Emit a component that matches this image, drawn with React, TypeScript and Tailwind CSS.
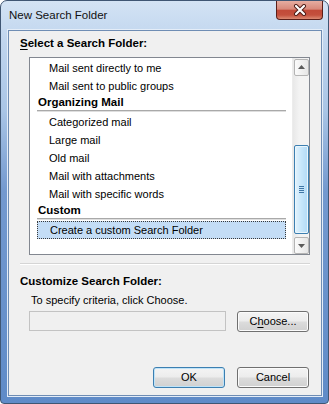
import React from "react";

const font = { fontFamily: '"Segoe UI", "Liberation Sans", Arial, sans-serif' };

function Row({ text, selected }: { text: string; selected?: boolean }) {
  return (
    <div
      className={
        "h-[18px] flex items-center pl-[12px] mx-[7px] mr-[6px] " +
        (selected ? "bg-[#c4ddf6] border border-dotted border-[#3a3a3a] pl-[11px]" : "")
      }
    >
      {text}
    </div>
  );
}

function Header({ text }: { text: string }) {
  return (
    <div className="h-[18px] flex flex-col ml-[7px] mr-[6px]">
      <div className="h-[15px] flex items-center pl-[1px] font-bold text-[11.5px]">{text}</div>
      <div className="h-[2px] border-t border-[#a9a9a9] bg-[#dedede]"></div>
    </div>
  );
}

function Btn({ children, def }: { children: React.ReactNode; def?: boolean }) {
  return (
    <div
      className={
        "w-[72px] h-[21px] rounded-[3px] border flex items-center justify-center " +
        (def
          ? "border-[#3c7fb1] shadow-[inset_0_0_0_1px_#bfe3f8] bg-[linear-gradient(180deg,#f4f4f4_0%,#ececec_48%,#dcdcdc_52%,#d0d0d0_100%)]"
          : "border-[#707070] shadow-[inset_0_0_0_1px_#fbfbfb] bg-[linear-gradient(180deg,#f4f4f4_0%,#ececec_48%,#dcdcdc_52%,#d0d0d0_100%)]")
      }
    >
      {children}
    </div>
  );
}

function ArrowBtn({ up }: { up?: boolean }) {
  return (
    <div className="w-[15px] h-[17px] mx-auto rounded-[2px] border border-[#b4b4b4] bg-[linear-gradient(90deg,#fbfbfb,#e6e6e6)] flex items-center justify-center">
      <svg width="7" height="4" viewBox="0 0 7 4">
        {up ? <path d="M0 4 L3.5 0 L7 4 Z" fill="#5a5a5a" /> : <path d="M0 0 L3.5 4 L7 0 Z" fill="#5a5a5a" />}
      </svg>
    </div>
  );
}

export default function App() {
  return (
    <div className="w-[329px] h-[404px] bg-white text-[11px] text-black" style={font}>
      <div className="relative w-[329px] h-[404px] rounded-t-[7px] rounded-b-[4px] border border-[#3f5673] bg-[linear-gradient(180deg,#d3e3f4_0px,#c0d5ee_40px,#a9c5e6_110px,#7399cf_190px,#5f8bc8_404px)] flex flex-col">
        {/* title bar */}
        <div className="h-[29px] flex items-center pl-[8px] text-[11.5px] text-[#111]">New Search Folder</div>
        <div className="absolute top-0 right-[5px] w-[47px] h-[19px] rounded-b-[4px] border border-t-0 border-[#5b1f19] bg-[linear-gradient(180deg,#e6ada1_0%,#d8897a_45%,#c24a38_52%,#c4503d_78%,#dc8a72_100%)] flex items-center justify-center">
          <svg width="14" height="12" viewBox="0 0 14 12">
            <path d="M3 2 L11 10 M11 2 L3 10" stroke="#4a1a14" strokeWidth="4" strokeLinecap="round" />
            <path d="M3 2 L11 10 M11 2 L3 10" stroke="#ffffff" strokeWidth="2.2" strokeLinecap="round" />
          </svg>
        </div>
        {/* client */}
        <div className="ml-[7px] mr-[6px] mb-[7px] flex-1 border border-[#6f8db4] shadow-[0_0_0_1px_#e4edf8] bg-[#f0f0f0] flex flex-col">
          <div className="mt-[4px] ml-[11px] h-[16px] leading-[16px] font-bold text-[11.5px]">
            <span className="underline underline-offset-[2px]">S</span>elect a Search Folder:
          </div>
          <div className="mt-[6px] ml-[20px] w-[281px] h-[198px] border border-[#828790] bg-white flex">
            <div className="flex-1 pt-[1px] flex flex-col">
              <Row text="Mail sent directly to me" />
              <Row text="Mail sent to public groups" />
              <Header text="Organizing Mail" />
              <Row text="Categorized mail" />
              <Row text="Large mail" />
              <Row text="Old mail" />
              <Row text="Mail with attachments" />
              <Row text="Mail with specific words" />
              <Header text="Custom" />
              <Row text="Create a custom Search Folder" selected />
            </div>
            <div className="w-[17px] bg-[linear-gradient(90deg,#e8e8e8,#f3f3f3_40%,#f3f3f3)] border-l border-[#ececec] flex flex-col pt-[1px]">
              <ArrowBtn up />
              <div className="mt-[69px] w-[15px] h-[90px] mx-auto rounded-[2px] border border-[#3c7fb1] bg-[linear-gradient(90deg,#e3f3fd,#c6e6fb_50%,#b2daf6)] shadow-[inset_0_0_0_1px_#eaf6fd] flex items-center justify-center">
                <div className="flex flex-col gap-[1px]">
                  <div className="w-[5px] h-[1px] bg-[#3f76a6]"></div>
                  <div className="w-[5px] h-[1px] bg-[#3f76a6]"></div>
                  <div className="w-[5px] h-[1px] bg-[#3f76a6]"></div>
                  <div className="w-[5px] h-[1px] bg-[#3f76a6]"></div>
                </div>
              </div>
              <div className="mt-[3px]">
                <ArrowBtn />
              </div>
            </div>
          </div>
          <div className="mt-[8px] ml-[11px] w-[290px] h-[2px] border-t border-[#d5d5d5] bg-white"></div>
          <div className="mt-[8px] ml-[11px] h-[16px] leading-[16px] font-bold text-[11.5px]">Customize Search Folder:</div>
          <div className="mt-[3px] ml-[22px] h-[16px] leading-[16px]">To specify criteria, click Choose.</div>
          <div className="mt-[3px] ml-[20px] flex items-start gap-[11px]">
            <div className="w-[197px] h-[20px] border border-[#c3c3c3] bg-[#f0f0f0]"></div>
            <Btn>
              <span>
                C<span className="underline underline-offset-[2px]">h</span>oose...
              </span>
            </Btn>
          </div>
          <div className="mt-[35px] mr-[12px] flex justify-end gap-[12px]">
            <Btn def>OK</Btn>
            <Btn>Cancel</Btn>
          </div>
        </div>
      </div>
    </div>
  );
}
